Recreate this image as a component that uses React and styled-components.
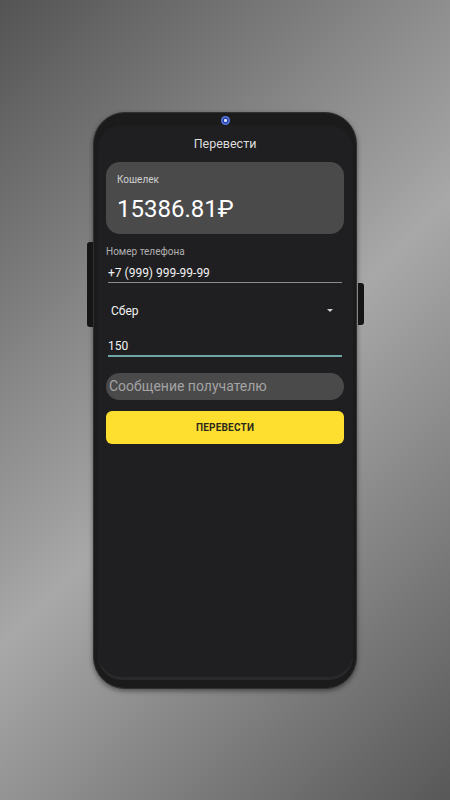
import React from 'react'
import styled, {createGlobalStyle} from 'styled-components'

const Global = createGlobalStyle`
  html, body { margin: 0; padding: 0; }
  body { font-family: Roboto, "Liberation Sans", sans-serif; }
`

const Page = styled.div`
  width: 450px;
  height: 800px;
  display: flex;
  align-items: center;
  justify-content: center;
  background: linear-gradient(135deg, #545454 0%, #a8a8a8 52%, #585858 100%);
`

const Phone = styled.div`
  position: relative;
  width: 264px;
  height: 577px;
  box-sizing: border-box;
  padding: 12px 3px 11px 4px;
  border-radius: 32px;
  background: #1b1b1c;
  border: 1px solid #303032;
  box-shadow: 0 2px 5px rgba(0, 0, 0, 0.45);
  display: flex;
`

const SideKey = styled.div`
  position: absolute;
  top: ${p => p.top}px;
  height: ${p => p.h}px;
  width: 6px;
  background: #151515;
  ${p => p.right ? 'right: -8px; border-radius: 0 3px 3px 0;' : 'left: -7px; border-radius: 3px 0 0 3px;'}
`

const Camera = styled.div`
  position: absolute;
  top: 3px;
  left: 50%;
  margin-left: -4.5px;
  width: 9px;
  height: 9px;
  border-radius: 50%;
  background: radial-gradient(circle, #d6defc 0 1.3px, #2a43a6 1.8px 2.8px, #5878e0 3.4px);
`

const Screen = styled.div`
  flex: 1;
  border-radius: 24px;
  background: #1f1f21;
  box-shadow: 0 3px 0 #29292b;
  padding: 0 9px 0 8px;
  display: flex;
  flex-direction: column;
  color: #fff;
`

const Title = styled.div`
  height: 37px;
  display: flex;
  align-items: center;
  justify-content: center;
  font-size: 12.5px;
  color: #dcdcdc;
`

const Wallet = styled.div`
  height: 72px;
  box-sizing: border-box;
  border-radius: 14px;
  background: #4a4a4b;
  padding: 12px 11px 0;
  margin-bottom: 12px;
`

const WalletLabel = styled.div`
  font-size: 10px;
  line-height: 12px;
  color: #d0d0d0;
`

const Balance = styled.div`
  margin-top: 9px;
  font-size: 24px;
  line-height: 28px;
  color: #fff;
`

const Label = styled.div`
  font-size: 10px;
  line-height: 12px;
  color: #b0b0b0;
`

const Field = styled.div`
  margin: 0 2px;
  padding: 7px 0 1px;
  font-size: 12px;
  line-height: 16px;
  color: #f2f2f2;
  border-bottom: ${p => p.focused ? '2px solid #6fa7a6' : '1px solid #8c8c8c'};
`

const Select = styled.div`
  height: 40px;
  margin-top: 8px;
  padding: 0 11px 0 5px;
  display: flex;
  align-items: center;
  justify-content: space-between;
  font-size: 12px;
  color: #f2f2f2;
`

const Caret = styled.span`
  width: 0;
  height: 0;
  border-left: 3.5px solid transparent;
  border-right: 3.5px solid transparent;
  border-top: 3.5px solid #d0d0d0;
`

const Message = styled.div`
  height: 27px;
  margin-top: 16px;
  border-radius: 14px;
  background: #4a4a4b;
  padding: 0 3px;
  display: flex;
  align-items: center;
  font-size: 14px;
  color: #a3a3a3;
`

const Submit = styled.div`
  height: 33px;
  margin-top: 11px;
  border-radius: 6px;
  background: #fede2f;
  display: flex;
  align-items: center;
  justify-content: center;
  font-size: 10px;
  font-weight: 700;
  letter-spacing: 0.2px;
  color: #2d2a1c;
`

const App = () => {
  return (
    <Page>
      <Global />
      <Phone>
        <SideKey top={129} h={85} />
        <SideKey right top={170} h={42} />
        <Camera />
        <Screen>
          <Title>Перевести</Title>
          <Wallet>
            <WalletLabel>Кошелек</WalletLabel>
            <Balance>15386.81₽</Balance>
          </Wallet>
          <Label>Номер телефона</Label>
          <Field>+7 (999) 999-99-99</Field>
          <Select>
            <span>Сбер</span>
            <Caret />
          </Select>
          <Field focused>150</Field>
          <Message>Сообщение получателю</Message>
          <Submit>ПЕРЕВЕСТИ</Submit>
        </Screen>
      </Phone>
    </Page>
  )
}

export default App
